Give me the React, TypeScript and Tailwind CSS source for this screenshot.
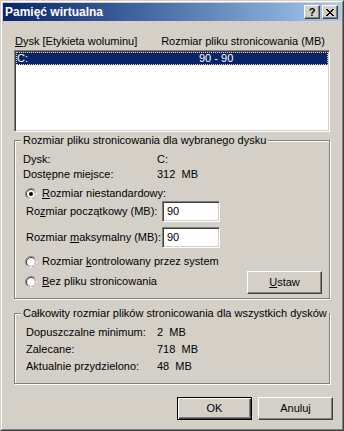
import type { ReactNode } from 'react';

const sunken =
  'border border-t-[#808080] border-l-[#808080] border-r-white border-b-white shadow-[inset_1px_1px_0_#404040,inset_-1px_-1px_0_#d4d0c8]';
const raised =
  'border border-t-white border-l-white border-r-[#404040] border-b-[#404040] shadow-[inset_-1px_-1px_0_#808080]';
const defaultBtn =
  'border border-black shadow-[inset_1px_1px_0_#fff,inset_-1px_-1px_0_#404040,inset_-2px_-2px_0_#808080]';

function Radio({ checked }: { checked?: boolean }) {
  return (
    <svg width={12} height={12} viewBox="0 0 12 12" className="shrink-0">
      <circle cx={6} cy={6} r={4.5} fill="#fff" />
      <circle cx={6} cy={6} r={5.5} fill="none" stroke="#808080" />
      <path d="M9.89 2.11 A5.5 5.5 0 0 1 2.11 9.89" fill="none" stroke="#fff" />
      <circle cx={6} cy={6} r={4.5} fill="none" stroke="#404040" />
      <path d="M9.18 2.82 A4.5 4.5 0 0 1 2.82 9.18" fill="none" stroke="#d4d0c8" />
      {checked && <circle cx={6} cy={6} r={2} fill="#000" />}
    </svg>
  );
}

function CloseGlyph() {
  const rows = [0, 1, 2, 3, 4, 5, 6];
  return (
    <svg width={8} height={7} viewBox="0 0 8 7" shapeRendering="crispEdges">
      {rows.map((i) => {
        const d = Math.min(i, 6 - i);
        return (
          <g key={i}>
            <rect x={d} y={i} width={2} height={1} fill="#000" />
            <rect x={6 - d} y={i} width={2} height={1} fill="#000" />
          </g>
        );
      })}
    </svg>
  );
}

function Group({ label, children }: { label: string; children: ReactNode }) {
  return (
    <div className="relative border border-[#808080] shadow-[inset_1px_1px_0_#fff,1px_1px_0_#fff] mr-[1px]">
      <span className="absolute left-[6px] -top-[7px] bg-[#d4d0c8] px-[2px] whitespace-nowrap">{label}</span>
      {children}
    </div>
  );
}

function Input({ value }: { value: string }) {
  return (
    <div className={`w-[58px] h-[21px] bg-white pl-[4px] flex items-center ${sunken}`}>{value}</div>
  );
}

export default function App() {
  return (
    <div className="w-[344px] h-[431px] border border-t-[#d4d0c8] border-l-[#d4d0c8] border-r-[#404040] border-b-[#404040] font-['Liberation_Sans',Arial,sans-serif] text-[11px] leading-[13px] text-black">
      <div className="h-full border border-t-white border-l-white border-r-[#808080] border-b-[#808080] p-[1px] bg-[#d4d0c8] flex flex-col">
        {/* title bar */}
        <div className="h-[18px] shrink-0 bg-linear-to-r from-[#0a246a] to-[#a6caf0] flex items-center pl-[2px] pr-[3px]">
          <span className="text-white font-bold text-[12px] flex-1">Pamięć wirtualna</span>
          <div className="flex gap-[2px]">
            <div className={`w-[16px] h-[14px] bg-[#d4d0c8] flex items-center justify-center font-bold text-[11px] leading-none ${raised}`}>?</div>
            <div className={`w-[16px] h-[14px] bg-[#d4d0c8] flex items-center justify-center ${raised}`}>
              <CloseGlyph />
            </div>
          </div>
        </div>

        <div className="flex flex-col pl-[11px] pr-[10px]">
          <div className="flex justify-between pt-[14px] pl-[1px] pr-[5px] mr-[1px]">
            <span>
              <u>D</u>ysk [Etykieta woluminu]
            </span>
            <span>Rozmiar pliku stronicowania (MB)</span>
          </div>

          <div className={`mt-[2px] h-[82px] bg-white mr-[1px] ${sunken}`}>
            <div className="m-[1px] h-[13px] bg-[#0a246a] text-white border border-dotted border-[#f5db95] flex items-center">
              <span className="w-[182px] pl-[0px]">C:</span>
              <span>90 - 90</span>
            </div>
          </div>

          <div className="mt-[8px]">
            <Group label="Rozmiar pliku stronicowania dla wybranego dysku">
              <div className="flex flex-col pt-[12px] pb-[4px]">
                <div className="flex pl-[8px]">
                  <span className="w-[134px]">Dysk:</span>
                  <span>C:</span>
                </div>
                <div className="flex pl-[8px] mt-[2px]">
                  <span className="w-[134px]">Dostępne miejsce:</span>
                  <span className="whitespace-pre">312  MB</span>
                </div>
                <div className="flex items-center pl-[10px] mt-[6px] gap-[5px]">
                  <Radio checked />
                  <span>
                    <u>R</u>ozmiar niestandardowy:
                  </span>
                </div>
                <div className="flex items-center pl-[11px] mt-[1px]">
                  <span className="w-[136px]">
                    Ro<u>z</u>miar początkowy (MB):
                  </span>
                  <Input value="90" />
                </div>
                <div className="flex items-center pl-[11px] mt-[5px]">
                  <span className="w-[136px]">
                    Rozmiar <u>m</u>aksymalny (MB):
                  </span>
                  <Input value="90" />
                </div>
                <div className="flex items-center pl-[10px] mt-[7px] gap-[5px]">
                  <Radio />
                  <span>
                    Rozmiar <u>k</u>ontrolowany przez system
                  </span>
                </div>
                <div className="flex items-center justify-between pl-[10px] pr-[7px] mt-[3px]">
                  <div className="flex items-center gap-[5px] pb-[2px]">
                    <Radio />
                    <span>
                      <u>B</u>ez pliku stronicowania
                    </span>
                  </div>
                  <div className={`w-[75px] h-[23px] flex items-center justify-center ${raised}`}>
                    <span>
                      <u>U</u>staw
                    </span>
                  </div>
                </div>
              </div>
            </Group>
          </div>

          <div className="mt-[14px]">
            <Group label="Całkowity rozmiar plików stronicowania dla wszystkich dysków">
              <div className="flex flex-col gap-[4px] pt-[12px] pb-[10px] pl-[11px]">
                <div className="flex">
                  <span className="w-[131px]">Dopuszczalne minimum:</span>
                  <span className="whitespace-pre">2  MB</span>
                </div>
                <div className="flex">
                  <span className="w-[131px]">Zalecane:</span>
                  <span className="whitespace-pre">718  MB</span>
                </div>
                <div className="flex">
                  <span className="w-[131px]">Aktualnie przydzielono:</span>
                  <span className="whitespace-pre">48  MB</span>
                </div>
              </div>
            </Group>
          </div>

          <div className="flex justify-end gap-[6px] mt-[13px] -mr-[2px]">
            <div className={`w-[75px] h-[23px] flex items-center justify-center ${defaultBtn}`}>OK</div>
            <div className={`w-[75px] h-[23px] flex items-center justify-center ${raised}`}>Anuluj</div>
          </div>
        </div>
      </div>
    </div>
  );
}
